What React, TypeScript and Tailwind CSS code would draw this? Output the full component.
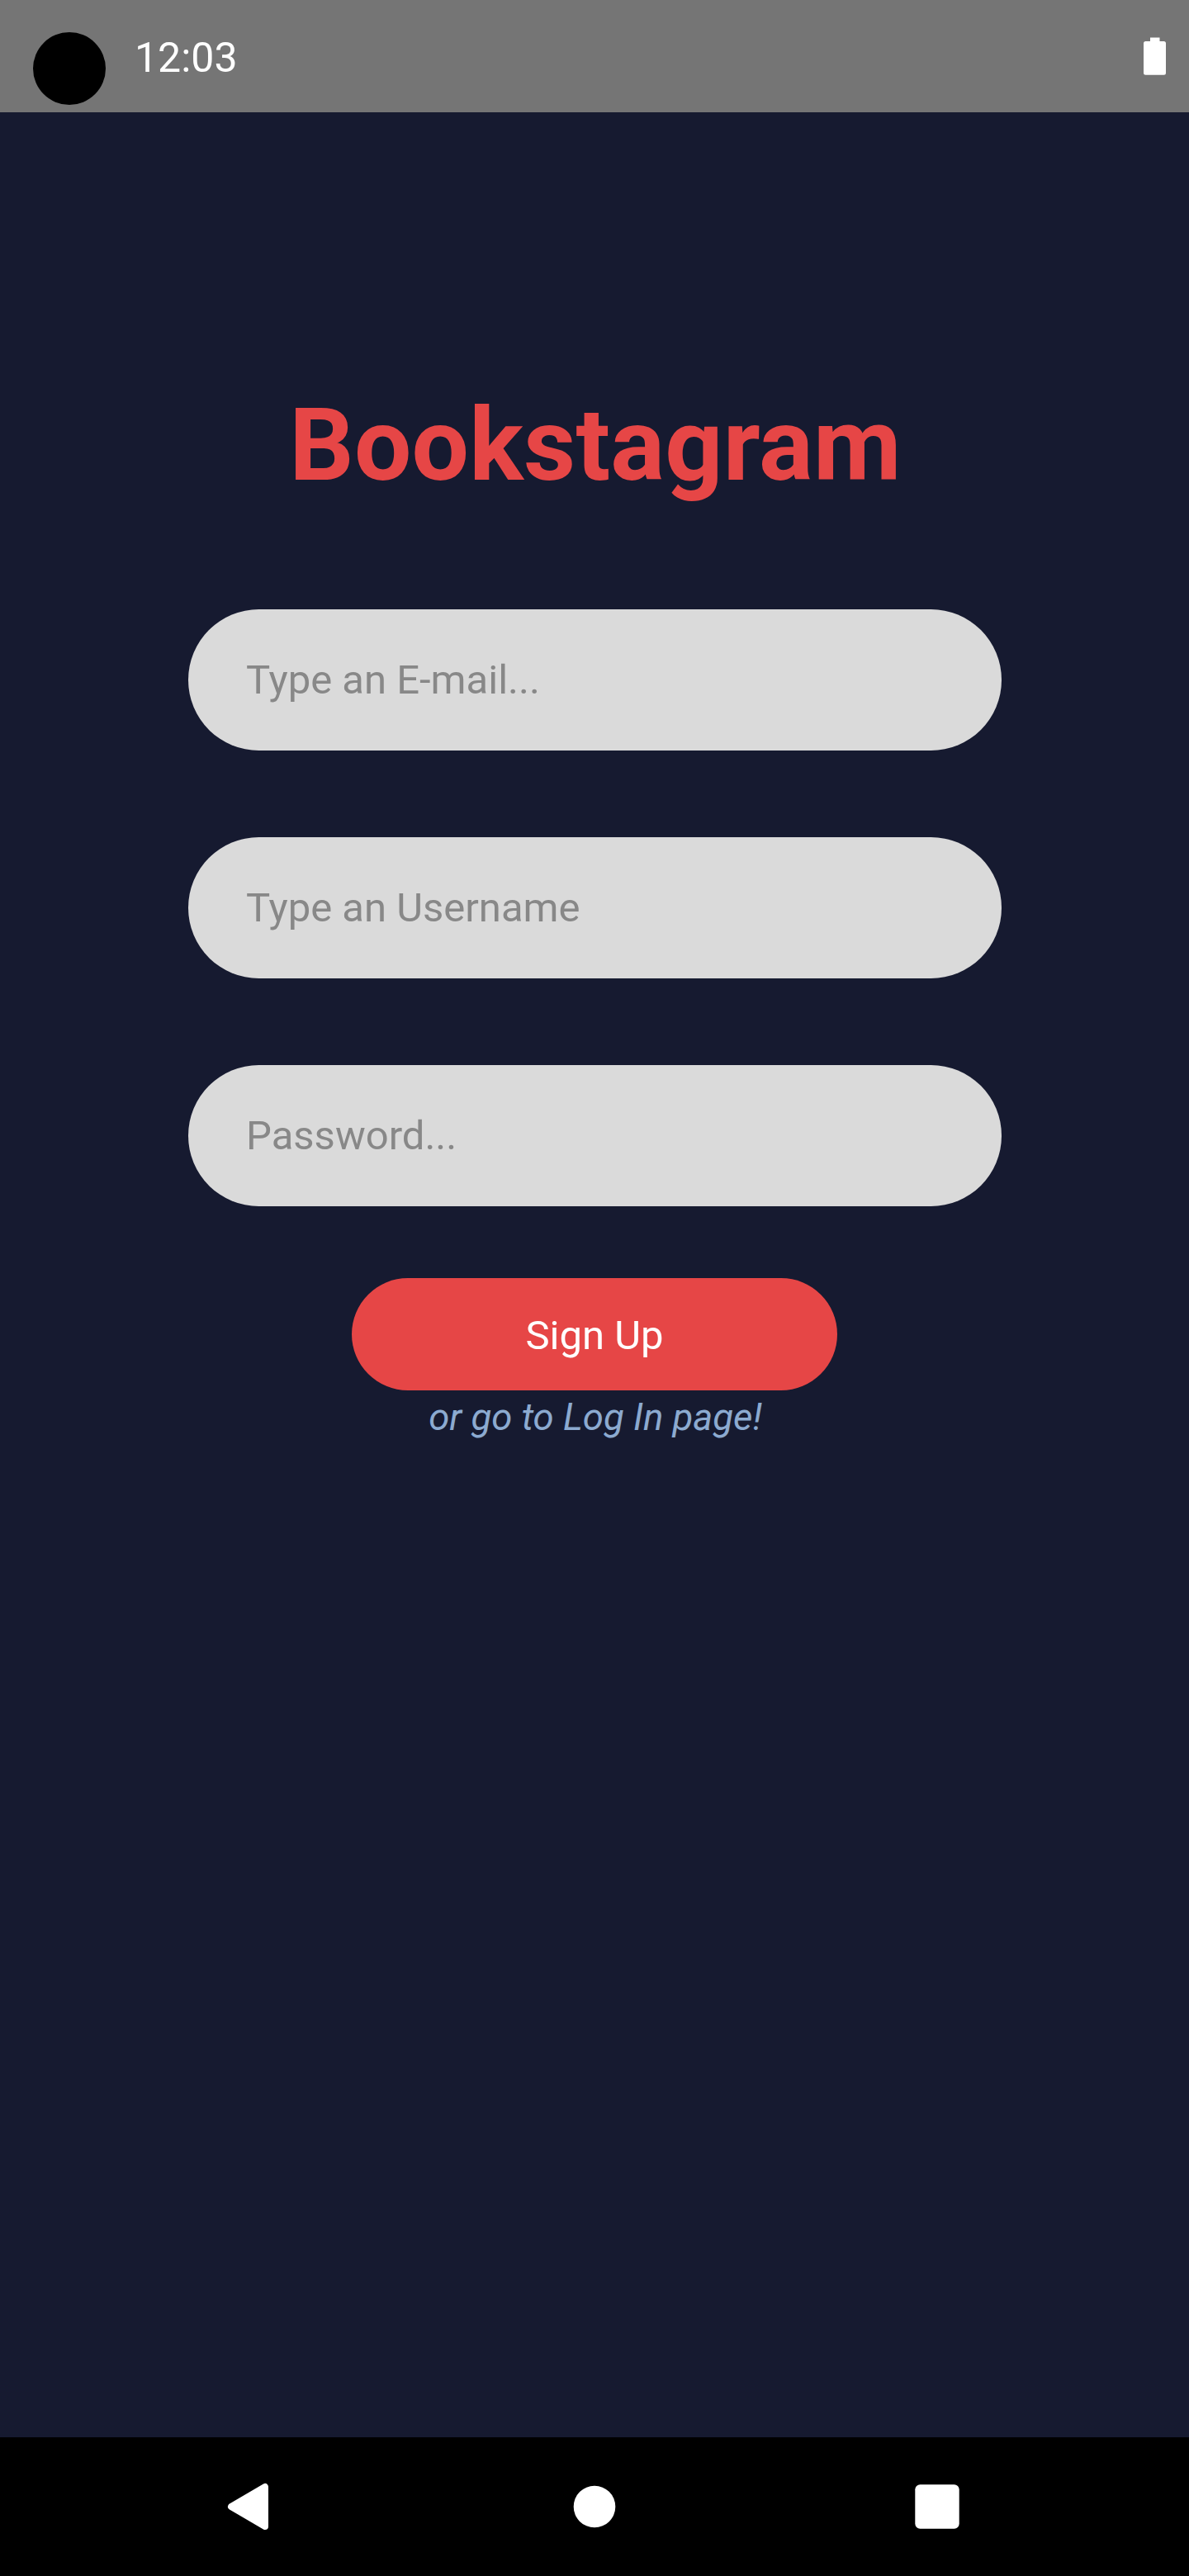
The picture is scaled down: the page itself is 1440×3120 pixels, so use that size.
function Field({ placeholder, type }: { placeholder: string; type: string }) {
  return (
    <input
      type={type}
      placeholder={placeholder}
      className="block h-[171px] w-[985px] rounded-full bg-[#dadada] px-[70px] text-[49px] text-[#888888] outline-none placeholder:text-[#888888]"
    />
  );
}

export default function App() {
  return (
    <div className="flex h-[3120px] w-[1440px] flex-col bg-[#161a30] font-['Roboto',sans-serif]">
      <header className="flex h-[136px] shrink-0 items-start bg-[#757575] pl-10 pr-[28px] text-white">
        <div className="mt-[39px] size-[88px] rounded-full bg-black" />
        <span className="ml-[35px] mt-[41px] text-[50px] leading-[58px]">12:03</span>
        <svg className="ml-auto mt-[45px]" width="27" height="46" viewBox="0 0 27 46" fill="currentColor">
          <path d="M8 0.4h11.5V5h5a2.5 2.5 0 0 1 2.5 2.5v35.7a2.5 2.5 0 0 1-2.5 2.5h-22a2.5 2.5 0 0 1-2.5-2.5V7.5a2.5 2.5 0 0 1 2.5-2.5H8z" />
        </svg>
      </header>
      <main className="flex grow flex-col items-center">
        <h1 className="ml-0.5 mt-[331px] text-[123px] font-bold leading-[144px] tracking-[0.2px] text-[#e64646]">
          Bookstagram
        </h1>
        <form className="ml-px mt-[127px] flex flex-col gap-[105px]">
          <Field type="email" placeholder="Type an E-mail..." />
          <Field type="text" placeholder="Type an Username" />
          <Field type="password" placeholder="Password..." />
        </form>
        <button className="mt-[87px] h-[136px] w-[588px] rounded-full bg-[#e64646] pt-1 text-[49px] text-white">
          Sign Up
        </button>
        <a className="ml-0.5 text-[45.5px] italic leading-[66px] text-[#8caad0]">or go to Log In page!</a>
      </main>
      <nav className="flex h-[168px] shrink-0 items-center justify-center gap-[333px] bg-black text-white">
        <svg width="84" height="84" viewBox="0 0 84 84" fill="currentColor">
          <path d="M60 18v48L19 42z" stroke="currentColor" strokeWidth="8" strokeLinejoin="round" />
        </svg>
        <svg width="84" height="84" viewBox="0 0 84 84" fill="currentColor">
          <circle cx="42" cy="42" r="25.3" />
        </svg>
        <svg width="84" height="84" viewBox="0 0 84 84" fill="currentColor">
          <rect x="13.3" y="15.3" width="53.4" height="53.4" rx="6" />
        </svg>
      </nav>
    </div>
  );
}
